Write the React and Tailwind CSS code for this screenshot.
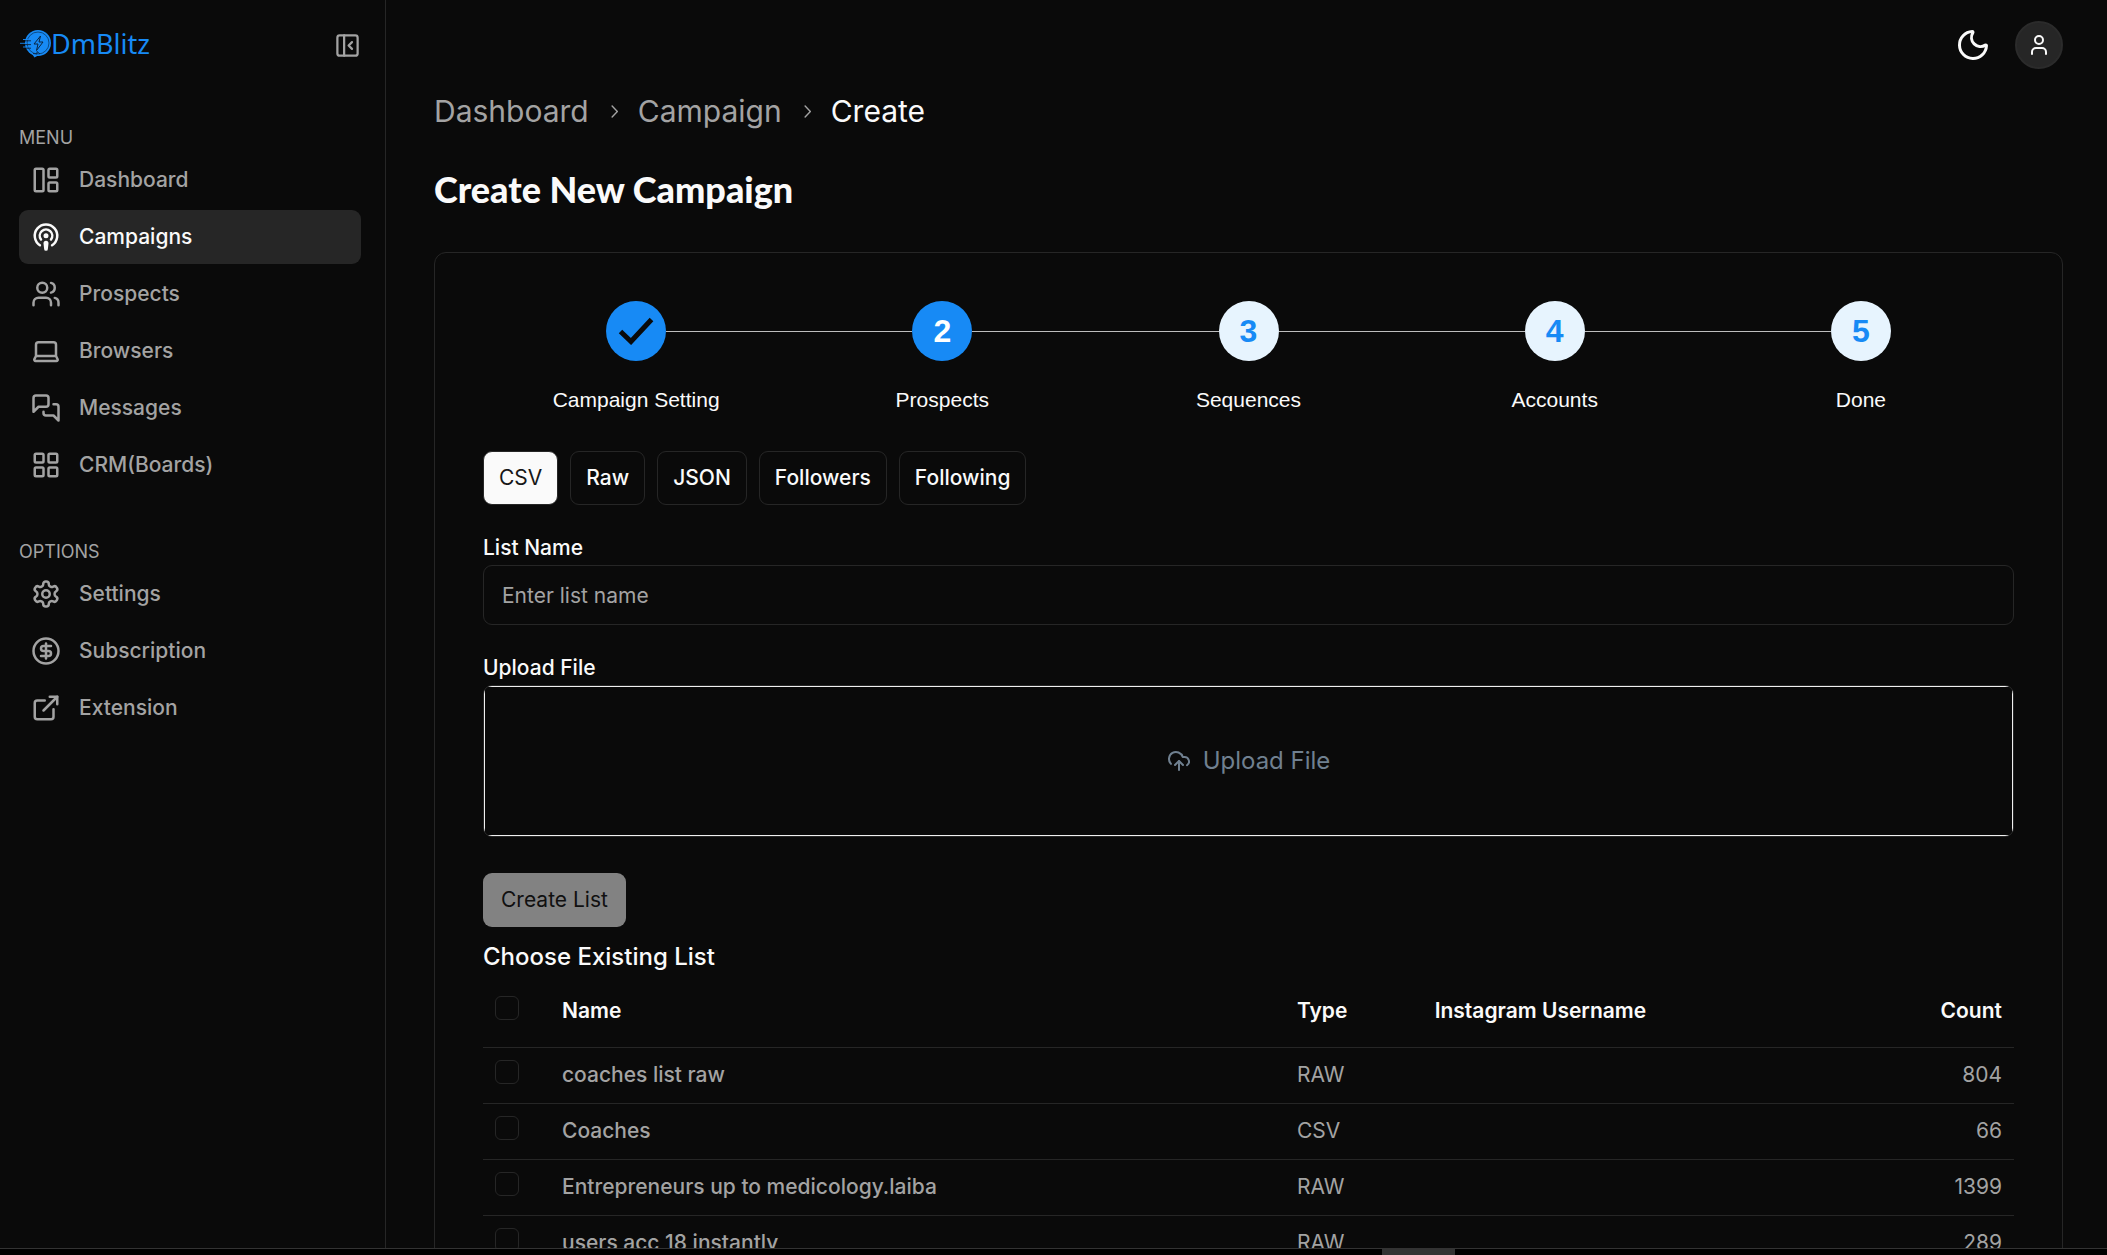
import { useState } from "react";
import {
  LayoutPanelLeft,
  Podcast,
  Users,
  LayoutGrid,
  CircleDollarSign,
  ExternalLink,
  PanelLeftClose,
  Moon,
  User,
} from "lucide-react";

function Glyph({ size = 30, children }) {
  return (
    <svg width={size} height={size} viewBox="0 0 24 24" fill="none" stroke="currentColor" strokeWidth="2" strokeLinecap="round" strokeLinejoin="round" aria-hidden="true">
      {children}
    </svg>
  );
}

const LaptopIcon = () => (
  <Glyph>
    <path d="M20 16V7a2 2 0 0 0-2-2H6a2 2 0 0 0-2 2v9m16 0H4m16 0 1.28 2.55a1 1 0 0 1-.9 1.45H3.62a1 1 0 0 1-.9-1.45L4 16" />
  </Glyph>
);

const MessagesIcon = () => (
  <Glyph>
    <path d="M14 9a2 2 0 0 1-2 2H6l-4 4V4a2 2 0 0 1 2-2h8a2 2 0 0 1 2 2v5Z" />
    <path d="M18 9h2a2 2 0 0 1 2 2v11l-4-4h-6a2 2 0 0 1-2-2v-1" />
  </Glyph>
);

const SettingsIcon = () => (
  <Glyph>
    <path d="M12.22 2h-.44a2 2 0 0 0-2 2v.18a2 2 0 0 1-1 1.73l-.43.25a2 2 0 0 1-2 0l-.15-.08a2 2 0 0 0-2.73.73l-.22.38a2 2 0 0 0 .73 2.73l.15.1a2 2 0 0 1 1 1.72v.51a2 2 0 0 1-1 1.74l-.15.09a2 2 0 0 0-.73 2.73l.22.38a2 2 0 0 0 2.73.73l.15-.08a2 2 0 0 1 2 0l.43.25a2 2 0 0 1 1 1.73V20a2 2 0 0 0 2 2h.44a2 2 0 0 0 2-2v-.18a2 2 0 0 1 1-1.73l.43-.25a2 2 0 0 1 2 0l.15.08a2 2 0 0 0 2.73-.73l.22-.39a2 2 0 0 0-.73-2.73l-.15-.08a2 2 0 0 1-1-1.74v-.5a2 2 0 0 1 1-1.74l.15-.09a2 2 0 0 0 .73-2.73l-.22-.38a2 2 0 0 0-2.73-.73l-.15.08a2 2 0 0 1-2 0l-.43-.25a2 2 0 0 1-1-1.73V4a2 2 0 0 0-2-2z" />
    <circle cx="12" cy="12" r="3" />
  </Glyph>
);

const menu = [
  { label: "Dashboard", icon: <LayoutPanelLeft size={30} /> },
  { label: "Campaigns", icon: <Podcast size={30} />, active: true },
  { label: "Prospects", icon: <Users size={30} /> },
  { label: "Browsers", icon: <LaptopIcon /> },
  { label: "Messages", icon: <MessagesIcon /> },
  { label: "CRM(Boards)", icon: <LayoutGrid size={30} /> },
];

const options = [
  { label: "Settings", icon: <SettingsIcon /> },
  { label: "Subscription", icon: <CircleDollarSign size={30} /> },
  { label: "Extension", icon: <ExternalLink size={30} /> },
];

const steps = [
  { label: "Campaign Setting", state: "done" },
  { label: "Prospects", state: "current" },
  { label: "Sequences", state: "next" },
  { label: "Accounts", state: "next" },
  { label: "Done", state: "next" },
];

const tabs = ["CSV", "Raw", "JSON", "Followers", "Following"];

const lists = [
  { name: "coaches list raw", type: "RAW", count: 804 },
  { name: "Coaches", type: "CSV", count: 66 },
  { name: "Entrepreneurs up to medicology.laiba", type: "RAW", count: 1399 },
  { name: "users acc 18 instantly", type: "RAW", count: 289 },
];

function Logo() {
  return (
    <svg width="31" height="28" viewBox="0 0 31 28" fill="none" aria-hidden="true">
      <circle cx="18" cy="13" r="13" fill="#178af5" />
      <path d="M12 24l2.500 3.500 4.500-2.500z" fill="#178af5" />
      <circle cx="18" cy="13" r="11" stroke="#0b4377" strokeWidth="0.900" />
      <path d="M20.500 6l-6.500 8h4l-1.500 6.500 6.500-8.500h-4z" stroke="#0a2440" strokeWidth="1" strokeLinejoin="round" />
      <path d="M3 9.500h5M0 13.300h7M3 17h5" stroke="#178af5" strokeWidth="0.900" />
      <path d="M5 10.800h6M5 14.600h6M6 18.200h5M13 23.500l4 .5v-2.500l3 2.500" stroke="#0a2440" strokeWidth="0.900" />
    </svg>
  );
}

function NavSection({ title, items }) {
  return (
    <section>
      <h2 className="mb-[3px] text-lg leading-6 text-[#a3a3a3]">{title}</h2>
      <ul className="flex flex-col gap-[3px]">
        {items.map((item) => (
          <li key={item.label}>
            <a
              href="#"
              className={
                item.active
                  ? "flex h-[54px] items-center gap-[18px] rounded-[9px] bg-[#262626] px-3 text-[21px] font-medium text-[#fafafa]"
                  : "flex h-[54px] items-center gap-[18px] rounded-[9px] px-3 text-[21px] font-medium text-[#a3a3a3]"
              }
            >
              {item.icon}
              {item.label}
            </a>
          </li>
        ))}
      </ul>
    </section>
  );
}

function Sidebar() {
  return (
    <aside className="flex w-[386px] shrink-0 flex-col border-r border-[#262626] pr-6 pl-[19px]">
      <div className="flex h-[90px] items-center justify-between">
        <a href="#" className="mb-0.5 flex items-center pl-px font-['Noto_Sans',sans-serif] text-[27px] leading-9 text-[#178af5]">
          <Logo />
          DmBlitz
        </a>
        <button type="button" aria-label="Collapse sidebar" className="text-[#a3a3a3]">
          <PanelLeftClose size={27} />
        </button>
      </div>
      <nav className="mt-9 flex flex-col gap-12">
        <NavSection title="MENU" items={menu} />
        <NavSection title="OPTIONS" items={options} />
      </nav>
    </aside>
  );
}

function Chevron() {
  return (
    <svg width="21" height="21" viewBox="0 0 15 15" fill="currentColor" aria-hidden="true">
      <path d="M6.1584 3.13508C6.35985 2.94621 6.67627 2.95642 6.86514 3.15788L10.6151 7.15788C10.7954 7.3502 10.7954 7.64949 10.6151 7.84182L6.86514 11.8418C6.67627 12.0433 6.35985 12.0535 6.1584 11.8646C5.95694 11.6757 5.94673 11.3593 6.1356 11.1579L9.565 7.49985L6.1356 3.84182C5.94673 3.64036 5.95694 3.32394 6.1584 3.13508Z" />
    </svg>
  );
}

function Breadcrumb() {
  return (
    <nav aria-label="Breadcrumb" className="flex items-center gap-3.5 text-3xl leading-[43px] text-[#a3a3a3]">
      <a href="#">Dashboard</a>
      <Chevron />
      <a href="#">Campaign</a>
      <Chevron />
      <span aria-current="page" className="text-[#fafafa]">Create</span>
    </nav>
  );
}

function Stepper() {
  return (
    <ol className="grid grid-cols-5 font-['Liberation_Sans',Arial,sans-serif]">
      {steps.map((step, i) => (
        <li key={step.label} className="flex flex-col items-center gap-6">
          <div className="flex w-full items-center">
            <span className={i === 0 ? "h-px flex-1" : "h-px flex-1 bg-[#bdbdbd]"} />
            <span
              className={
                step.state === "next"
                  ? "flex size-[60px] items-center justify-center rounded-full bg-[#e7f4fe] text-[32px] font-bold text-[#178af5]"
                  : "flex size-[60px] items-center justify-center rounded-full bg-[#178af5] text-[32px] font-bold text-white"
              }
            >
              {step.state === "done" ? (
                <svg width="36" height="28" viewBox="0 0 36 28" fill="none" stroke="#0a0a0a" strokeWidth="5" aria-label="Completed">
                  <path d="M2.500 14.500L13 24.500 33.500 2.500" />
                </svg>
              ) : (
                i + 1
              )}
            </span>
            <span className={i === steps.length - 1 ? "h-px flex-1" : "h-px flex-1 bg-[#bdbdbd]"} />
          </div>
          <span className="text-[21px] leading-[30px] text-[#fafafa]">{step.label}</span>
        </li>
      ))}
    </ol>
  );
}

function Tick({ label }) {
  return (
    <input
      type="checkbox"
      aria-label={label}
      className="mb-1.5 block size-6 appearance-none rounded-md border border-[#262626] checked:bg-[#fafafa]"
    />
  );
}

function ListTable() {
  return (
    <table className="w-full table-fixed text-[21px] leading-[30px]">
      <colgroup>
        <col className="w-[67px]" />
        <col className="w-[48%]" />
        <col className="w-[9%]" />
        <col />
        <col className="w-[12%]" />
      </colgroup>
      <thead>
        <tr className="h-[72px] border-b border-[#262626] text-left text-[#fafafa]">
          <th className="px-3"><Tick label="Select all lists" /></th>
          <th className="px-3 font-semibold">Name</th>
          <th className="px-3 font-semibold">Type</th>
          <th className="px-3 font-semibold">Instagram Username</th>
          <th className="px-3 text-right font-semibold">Count</th>
        </tr>
      </thead>
      <tbody>
        {lists.map((row) => (
          <tr key={row.name} className="h-14 border-b border-[#262626] text-[#a3a3a3]">
            <td className="px-3"><Tick label={"Select " + row.name} /></td>
            <td className="px-3 font-medium">{row.name}</td>
            <td className="px-3">{row.type}</td>
            <td className="px-3" />
            <td className="px-3 text-right">{row.count}</td>
          </tr>
        ))}
      </tbody>
    </table>
  );
}

export default function App() {
  const [tab, setTab] = useState("CSV");

  return (
    <div className="flex h-screen flex-col overflow-hidden bg-[#0a0a0a] font-[Inter,sans-serif] text-[#fafafa]">
      <div className="flex min-h-0 flex-1 overflow-hidden border-b border-[#333333]">
        <Sidebar />
        <div className="min-w-0 flex-1 overflow-hidden pr-11 pl-12">
          <header className="flex h-[90px] items-center justify-end gap-6">
            <button type="button" aria-label="Toggle theme">
              <Moon size={36} />
            </button>
            <button type="button" aria-label="Account" className="flex size-12 items-center justify-center rounded-full border-2 border-[#2b2b2b] bg-[#262626]">
              <User size={24} />
            </button>
          </header>
          <main>
            <Breadcrumb />
            <h1 className="mt-[29px] font-[Lato,sans-serif] text-4xl leading-[54px] font-black">Create New Campaign</h1>
            <div className="mt-9 rounded-xl border border-[#262626] p-12">
              <Stepper />
              <div role="tablist" className="mt-9 flex gap-3">
                {tabs.map((name) => (
                  <button
                    key={name}
                    type="button"
                    role="tab"
                    aria-selected={tab === name}
                    onClick={() => setTab(name)}
                    className={
                      tab === name
                        ? "h-[54px] rounded-[9px] border border-[#262626] bg-[#fafafa] px-[15px] text-[21px] text-[#171717]"
                        : "h-[54px] rounded-[9px] border border-[#262626] px-[15px] text-[21px] font-medium text-[#fafafa]"
                    }
                  >
                    {name}
                  </button>
                ))}
              </div>
              <div className="mt-[27px]">
                <label htmlFor="list-name" className="mb-px block text-[21px] leading-8 font-medium">List Name</label>
                <input
                  id="list-name"
                  type="text"
                  placeholder="Enter list name"
                  className="block h-[60px] w-full rounded-[9px] border border-[#262626] bg-transparent px-[18px] text-[21px] placeholder:text-[#a3a3a3]"
                />
              </div>
              <div className="mt-[27px]">
                <p id="upload-label" className="mb-px text-[21px] leading-8 font-medium">Upload File</p>
                <div className="overflow-hidden rounded-[9px] border border-[#262626]">
                  <button type="button" aria-describedby="upload-label" className="flex h-[150px] w-full items-center justify-center gap-3 border border-[#f0f0f0] text-2xl text-[#708090]">
                    <Glyph size={24}>
                      <path d="M4 14.899A7 7 0 1 1 15.71 8h1.790a4.500 4.500 0 0 1 2.500 8.242" />
                      <path d="M12 12v9" />
                      <path d="m16 16-4-4-4 4" />
                    </Glyph>
                    Upload File
                  </button>
                </div>
              </div>
              <button type="button" className="mt-9 block h-[54px] rounded-[9px] bg-[#828282] px-[18px] text-[21px] text-[#101010]">
                Create List
              </button>
              <h2 className="mt-3 text-2xl leading-9 font-medium">Choose Existing List</h2>
              <ListTable />
            </div>
          </main>
        </div>
      </div>
      <div className="flex h-1.5 shrink-0 bg-black">
        <div className="w-[1382px]" />
        <div className="w-[73px] bg-[#333333]" />
      </div>
    </div>
  );
}
